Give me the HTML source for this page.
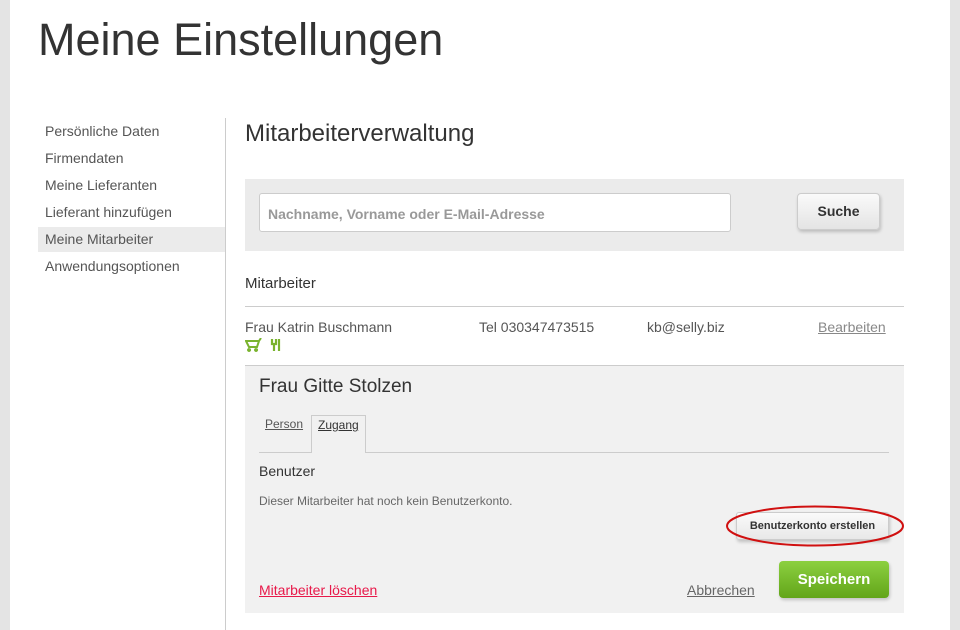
<!DOCTYPE html>
<html><head><meta charset="utf-8"><style>
body{margin:0;width:960px;height:630px;overflow:hidden;background:#fff;font-family:"Liberation Sans",sans-serif;color:#444;position:relative}
.a{position:absolute;white-space:nowrap}
.strip{position:absolute;top:0;bottom:0;width:10px;background:#e4e4e4}
a{color:inherit}
</style></head><body>
<div class="strip" style="left:0"></div><div class="strip" style="left:950px"></div>
<div class="a" style="left:38px;top:14px;font-size:45px;color:#333;letter-spacing:0px">Meine Einstellungen</div>
<div class="a" style="left:225px;top:118px;width:1px;height:512px;background:#ccc"></div>
<div class="a" style="left:38px;top:227px;width:187px;height:25px;background:#ebebeb"></div>
<div class="a" style="left:45px;top:118px;font-size:14px;line-height:27px;color:#555">Persönliche Daten<br>Firmendaten<br>Meine Lieferanten<br>Lieferant hinzufügen<br>Meine Mitarbeiter<br>Anwendungsoptionen</div>
<div class="a" style="left:245px;top:120px;font-size:24px;color:#333">Mitarbeiterverwaltung</div>
<div class="a" style="left:245px;top:179px;width:659px;height:72px;background:#ebebeb"></div>
<div class="a" style="left:259px;top:193px;width:472px;height:39px;background:#fff;border:1px solid #ccc;border-radius:3px;box-sizing:border-box"></div>
<div class="a" style="left:268px;top:206px;font-size:14px;font-weight:bold;color:#999">Nachname, Vorname oder E-Mail-Adresse</div>
<div class="a" style="left:797px;top:193px;width:83px;height:37px;background:linear-gradient(#fafafa,#e4e4e4);border:1px solid #ccc;border-radius:4px;box-sizing:border-box;box-shadow:1px 2px 3px rgba(0,0,0,.2);text-align:center;line-height:35px;font-size:14px;font-weight:bold;color:#333">Suche</div>
<div class="a" style="left:245px;top:275px;font-size:15px;color:#333">Mitarbeiter</div>
<div class="a" style="left:245px;top:306px;width:659px;height:1px;background:#ccc"></div>
<div class="a" style="left:245px;top:319px;font-size:14px;color:#555">Frau Katrin Buschmann</div>
<div class="a" style="left:479px;top:319px;font-size:14px;color:#555">Tel 030347473515</div>
<div class="a" style="left:647px;top:319px;font-size:14px;color:#555">kb@selly.biz</div>
<div class="a" style="left:818px;top:319px;font-size:14px;color:#888;text-decoration:underline">Bearbeiten</div>
<svg class="a" style="left:245px;top:338px" width="40" height="14"><path d="M1 3h13l-2 6H4z M4 11a1 1 0 1 0 .1 0 M11 11a1 1 0 1 0 .1 0 M14 3l2-3" stroke="#7ab32e" stroke-width="2" fill="none"/><path d="M27 1v5h4V1 M29 6v7 M34 1v12" stroke="#7ab32e" stroke-width="2.2" fill="none"/></svg>
<div class="a" style="left:245px;top:365px;width:659px;height:1px;background:#ccc"></div>
<div class="a" style="left:245px;top:366px;width:659px;height:247px;background:#f1f1f1"></div>
<div class="a" style="left:259px;top:376px;font-size:19px;color:#333">Frau Gitte Stolzen</div>
<div class="a" style="left:311px;top:415px;width:55px;height:38px;border:1px solid #ccc;border-bottom:none;box-sizing:border-box;background:#f1f1f1"></div>
<div class="a" style="left:259px;top:452px;width:630px;height:1px;background:#ccc"></div>
<div class="a" style="top:452px;width:53px;height:1px;background:#f1f1f1;left:312px"></div>
<div class="a" style="left:265px;top:417px;font-size:12px;color:#555;text-decoration:underline">Person</div>
<div class="a" style="left:318px;top:418px;font-size:12px;color:#333;text-decoration:underline">Zugang</div>
<div class="a" style="left:259px;top:463px;font-size:14px;color:#333">Benutzer</div>
<div class="a" style="left:259px;top:494px;font-size:12px;color:#666">Dieser Mitarbeiter hat noch kein Benutzerkonto.</div>
<div class="a" style="left:736px;top:512px;width:153px;height:28px;background:linear-gradient(#fafafa,#e8e8e8);border:1px solid #ccc;border-radius:3px;box-sizing:border-box;box-shadow:1px 2px 3px rgba(0,0,0,.2);text-align:center;line-height:26px;font-size:11px;font-weight:bold;color:#333">Benutzerkonto erstellen</div>
<svg class="a" style="left:725px;top:504px" width="182" height="46"><ellipse cx="90" cy="22" rx="88" ry="19.5" fill="none" stroke="#d01010" stroke-width="2"/></svg>
<div class="a" style="left:779px;top:561px;width:110px;height:37px;background:linear-gradient(#8cd040,#62a519);border-radius:4px;box-shadow:1px 2px 3px rgba(0,0,0,.2);text-align:center;line-height:37px;font-size:15px;font-weight:bold;color:#fff">Speichern</div>
<div class="a" style="left:687px;top:582px;font-size:14px;color:#666;text-decoration:underline">Abbrechen</div>
<div class="a" style="left:259px;top:582px;font-size:14px;color:#e8194a;text-decoration:underline">Mitarbeiter löschen</div>
</body></html>
